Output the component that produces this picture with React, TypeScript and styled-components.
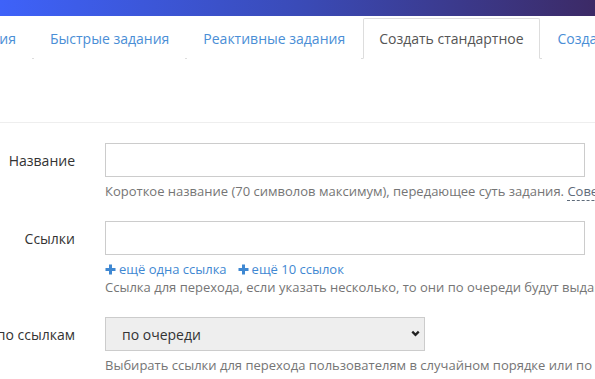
import React from 'react';
import styled, { createGlobalStyle } from 'styled-components';

const Global = createGlobalStyle`
  html, body {
    margin: 0;
    padding: 0;
    background: #fff;
    overflow: hidden;
  }
  body {
    font-family: "Open Sans", "Liberation Sans", sans-serif;
    color: #333;
    width: 595px;
    height: 379px;
  }
`;

const TopBar = styled.div`
  height: 16px;
  background: linear-gradient(90deg, #3e62f9 0%, #3a4bb8 50%, #3c2a66 100%);
`;

const Nav = styled.ul`
  display: flex;
  margin: 0;
  padding: 2px 0 0;
  list-style: none;
  border-bottom: 1px solid #ddd;
  white-space: nowrap;
`;

const Tab = styled.li<{ $active?: boolean; $width?: number }>`
  display: flex;
  justify-content: flex-end;
  flex: none;
  box-sizing: border-box;
  width: ${(p) => (p.$width ? `${p.$width}px` : 'auto')};
  margin: 0 2px -1px 0;
  padding: 10px 15px 9px;
  line-height: 20px;
  font-size: 14px;
  color: ${(p) => (p.$active ? '#555' : '#4a8ed6')};
  background: #fff;
  border: 1px solid ${(p) => (p.$active ? '#ddd' : 'transparent')};
  border-bottom-color: ${(p) => (p.$active ? '#fff' : 'transparent')};
  border-radius: 2px 2px 0 0;
`;

const Header = styled.div`
  height: 63px;
  border-bottom: 1px solid #eee;
`;

const Form = styled.form`
  display: flex;
  flex-direction: column;
  gap: 21px;
  padding-top: 20px;
`;

const Group = styled.div`
  display: grid;
  grid-template-columns: 75px 480px;
  column-gap: 30px;
  align-items: start;
`;

const Label = styled.label`
  display: flex;
  justify-content: flex-end;
  align-items: center;
  height: 34px;
  font-size: 14px;
  color: #333;
  white-space: nowrap;
`;

const Control = styled.div`
  display: flex;
  flex-direction: column;
  gap: 5px;
`;

const Notes = styled.div`
  display: flex;
  flex-direction: column;
`;

const Input = styled.input`
  box-sizing: border-box;
  width: 480px;
  height: 34px;
  margin: 0;
  padding: 6px 12px;
  border: 1px solid #ccc;
  border-radius: 0;
  font: inherit;
  font-size: 14px;
  outline: none;
`;

const Help = styled.div`
  font-size: 13px;
  line-height: 18px;
  color: #757575;
  white-space: nowrap;
`;

const Hint = styled.span`
  color: #5f6b7a;
  border-bottom: 1px dashed #5f6b7a;
`;

const Links = styled.div`
  display: flex;
  gap: 11px;
  font-size: 13px;
  line-height: 18px;
  color: #3f88d2;
`;

const AddLink = styled.a`
  display: flex;
  align-items: center;
  gap: 3px;
  cursor: pointer;
`;

const SelectWrap = styled.div`
  position: relative;
  width: 320px;
`;

const Select = styled.select`
  appearance: none;
  box-sizing: border-box;
  width: 320px;
  height: 34px;
  margin: 0;
  padding: 0 30px 0 16px;
  border: 1px solid #ccc;
  border-radius: 0;
  background: #eee;
  font: inherit;
  font-size: 14px;
  color: #333;
  outline: none;
`;

const Chevron = styled.svg`
  position: absolute;
  right: 5px;
  top: 13px;
  pointer-events: none;
`;

const Plus = () => (
  <svg width="11" height="11" viewBox="0 0 11 11">
    <path d="M5.5 0.5v10M0.5 5.5h10" stroke="#3f88d2" strokeWidth="3" />
  </svg>
);

export default function App() {
  return (
    <>
      <Global />
      <TopBar />
      <Nav>
        <Tab $width={32}>Мои задания</Tab>
        <Tab>Быстрые задания</Tab>
        <Tab>Реактивные задания</Tab>
        <Tab $active>Создать стандартное</Tab>
        <Tab>Создать реактивное</Tab>
      </Nav>
      <Header />
      <Form>
        <Group>
          <Label>Название</Label>
          <Control>
            <Input type="text" />
            <Help>
              Короткое название (70 символов максимум), передающее суть задания. <Hint>Советы</Hint>
            </Help>
          </Control>
        </Group>
        <Group>
          <Label>Ссылки</Label>
          <Control>
            <Input type="text" />
            <Notes>
              <Links>
                <AddLink>
                  <Plus />
                  ещё одна ссылка
                </AddLink>
                <AddLink>
                  <Plus />
                  ещё 10 ссылок
                </AddLink>
              </Links>
              <Help>Ссылка для перехода, если указать несколько, то они по очереди будут выданы пользователям</Help>
            </Notes>
          </Control>
        </Group>
        <Group>
          <Label>Переход по ссылкам</Label>
          <Control>
            <SelectWrap>
              <Select defaultValue="queue">
                <option value="queue">по очереди</option>
                <option value="random">в случайном порядке</option>
              </Select>
              <Chevron width="9" height="7" viewBox="0 0 10 8">
                <path d="M1.3 1.8L5 5.5l3.7-3.7" fill="none" stroke="#222" strokeWidth="2.6" />
              </Chevron>
            </SelectWrap>
            <Help>Выбирать ссылки для перехода пользователям в случайном порядке или по очереди</Help>
          </Control>
        </Group>
      </Form>
    </>
  );
}
